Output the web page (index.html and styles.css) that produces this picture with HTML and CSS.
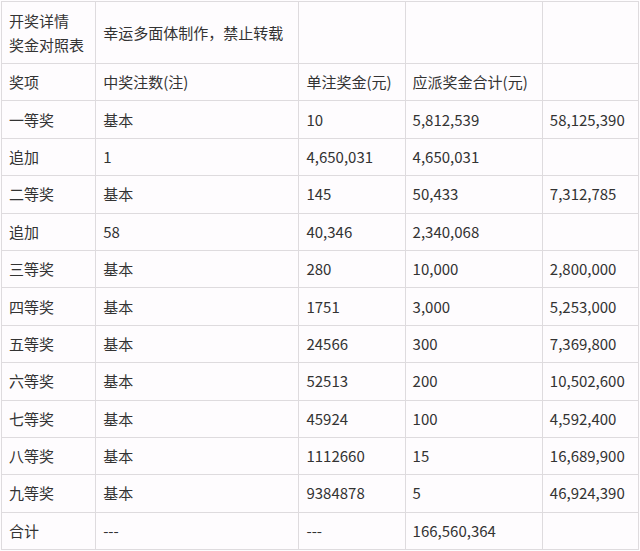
FILE: index.html
```html
<!DOCTYPE html>
<html lang="zh">
<head>
<meta charset="utf-8">
<link rel="stylesheet" href="styles.css">
</head>
<body>
<table class="prize">
  <colgroup>
    <col class="c1"><col class="c2"><col class="c3"><col class="c4"><col class="c5">
  </colgroup>
  <tr class="head">
    <td>开奖详情<br>奖金对照表</td>
    <td>幸运多面体制作，禁止转载</td>
    <td></td><td></td><td></td>
  </tr>
  <tr><td>奖项</td><td>中奖注数(注)</td><td>单注奖金(元)</td><td>应派奖金合计(元)</td><td></td></tr>
  <tr><td>一等奖</td><td>基本</td><td>10</td><td>5,812,539</td><td>58,125,390</td></tr>
  <tr><td>追加</td><td>1</td><td>4,650,031</td><td>4,650,031</td><td></td></tr>
  <tr><td>二等奖</td><td>基本</td><td>145</td><td>50,433</td><td>7,312,785</td></tr>
  <tr><td>追加</td><td>58</td><td>40,346</td><td>2,340,068</td><td></td></tr>
  <tr><td>三等奖</td><td>基本</td><td>280</td><td>10,000</td><td>2,800,000</td></tr>
  <tr><td>四等奖</td><td>基本</td><td>1751</td><td>3,000</td><td>5,253,000</td></tr>
  <tr><td>五等奖</td><td>基本</td><td>24566</td><td>300</td><td>7,369,800</td></tr>
  <tr><td>六等奖</td><td>基本</td><td>52513</td><td>200</td><td>10,502,600</td></tr>
  <tr><td>七等奖</td><td>基本</td><td>45924</td><td>100</td><td>4,592,400</td></tr>
  <tr><td>八等奖</td><td>基本</td><td>1112660</td><td>15</td><td>16,689,900</td></tr>
  <tr><td>九等奖</td><td>基本</td><td>9384878</td><td>5</td><td>46,924,390</td></tr>
  <tr><td>合计</td><td>---</td><td>---</td><td>166,560,364</td><td></td></tr>
</table>
</body>
</html>
```
FILE: styles.css
```css
html, body {
  margin: 0;
  padding: 0;
  background: #fefcfe;
}
.prize {
  border-collapse: collapse;
  table-layout: fixed;
  width: 638px;
  margin: 1px 0 0 1px;
  font-family: "Noto Sans CJK SC", "Noto Sans", sans-serif;
  font-size: 15px;
  color: #333;
}
.c1 { width: 94px; }
.c2 { width: 203px; }
.c3 { width: 106px; }
.c4 { width: 137px; }
.c5 { width: 96px; }
.prize td {
  border: 1px solid #dedbde;
  padding: 0 7px;
  height: 36.4px;
  line-height: 20px;
  vertical-align: middle;
  white-space: nowrap;
}
.prize tr.head td {
  height: 61px;
  line-height: 24px;
}
```
